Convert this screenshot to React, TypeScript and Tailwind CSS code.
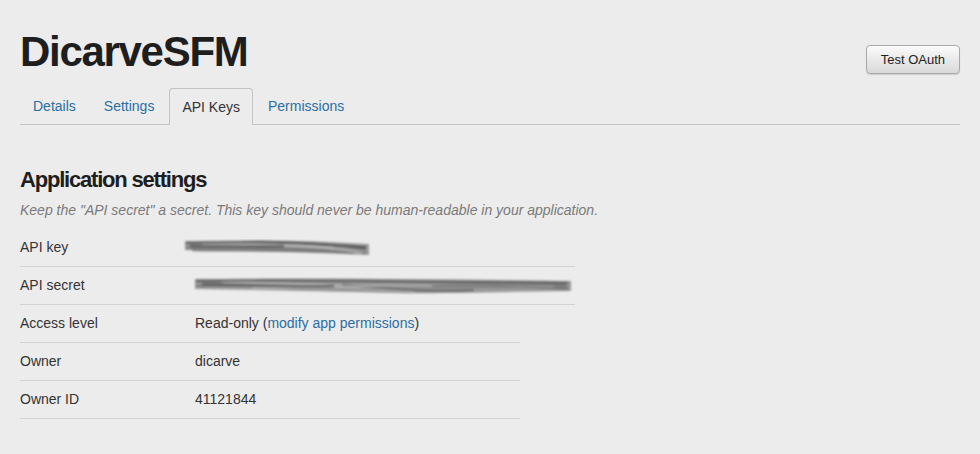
import React from 'react'

const tabs = ['Details', 'Settings', 'API Keys', 'Permissions']

const Scribble = ({ w, h, id, band, strokes }: { w: number; h: number; id: string; band: string; strokes: string[] }) => (
  <svg width={w} height={h} viewBox={`0 0 ${w} ${h}`} className="block">
    <defs>
      <filter id={id} x="-5%" y="-40%" width="110%" height="180%">
        <feGaussianBlur stdDeviation="0.8" />
      </filter>
    </defs>
    <g filter={`url(#${id})`} fill="none" strokeLinecap="round">
      <path d={band} fill="#999999" />
      {strokes.map((d, i) => (
        <path
          key={i}
          d={d}
          stroke={i % 3 === 0 ? '#555555' : i % 3 === 1 ? '#747474' : '#b4b4b4'}
          strokeWidth={i % 2 ? 2 : 2.5}
          opacity={0.8}
        />
      ))}
    </g>
  </svg>
)

const keyBand = 'M2 2 C 60 1, 120 1, 186 5 L 186 16 C 120 13, 60 12, 2 11 Z'
const keyStrokes = [
  'M4 4 C 50 3, 110 3, 182 8',
  'M4 9 C 60 8, 120 8, 182 14',
  'M20 6 C 70 5, 100 5, 150 9',
  'M60 3 C 100 2, 140 4, 182 10',
  'M10 11 C 70 12, 120 10, 170 14',
  'M90 7 C 120 6, 150 9, 178 14',
  'M8 7 C 40 7, 70 8, 100 7',
]

const secretBand = 'M2 2 C 100 1, 240 2, 378 4 L 378 14 C 300 15, 230 17, 200 16 C 120 14, 60 13, 2 12 Z'
const secretStrokes = [
  'M4 4 C 100 3, 220 4, 374 6',
  'M4 9 C 110 8, 240 10, 374 10',
  'M30 6 C 90 5, 150 9, 220 14',
  'M150 8 C 200 12, 230 15, 280 13',
  'M200 5 C 260 6, 320 8, 374 12',
  'M60 11 C 150 9, 300 7, 360 9',
  'M10 7 C 60 8, 100 10, 140 9',
  'M240 9 C 290 8, 330 7, 372 8',
]

const Row = ({ label, children }: { label: string; children: React.ReactNode }) => (
  <div className="flex items-center h-[38px] border-b border-[#d2d2d2]">
    <div className="w-[175px] shrink-0">{label}</div>
    <div className="flex items-center">{children}</div>
  </div>
)

export default function App() {
  return (
    <div className="min-h-screen bg-[#ececec] px-5 text-[#333] font-['Liberation_Sans',Arial,sans-serif]">
      {/* Шапка */}
      <div className="flex justify-between items-start pt-[31px]">
        <h1 className="text-[42px] font-bold leading-none tracking-[-1.3px] text-[#1e1e1e]">DicarveSFM</h1>
        <button className="mt-[14px] h-[29px] px-[14px] text-[13px] text-[#222] rounded-[4px] border border-[#a9a9a9] bg-gradient-to-b from-[#fbfbfb] to-[#d9d9d9] shadow-[0_1px_1px_rgba(0,0,0,0.12)]">
          Test OAuth
        </button>
      </div>

      {/* Вкладки */}
      <div className="mt-[14px] flex gap-[2px] border-b border-[#c4c4c4]">
        {tabs.map((t) => (
          <div
            key={t}
            className={
              t === 'API Keys'
                ? 'h-[37px] -mb-px flex items-center px-3 text-[14px] rounded-t-[4px] border border-b-0 border-[#c4c4c4] bg-[#ececec] text-[#333]'
                : 'h-[36px] flex items-center px-3 text-[14px] border border-transparent text-[#2b6ea3]'
            }
          >
            {t}
          </div>
        ))}
      </div>

      {/* Настройки приложения */}
      <h2 className="mt-[42px] text-[22px] font-bold leading-[26px] tracking-[-1.2px] text-[#1e1e1e]">Application settings</h2>
      <p className="mt-[8px] text-[14px] leading-[18px] italic text-[#7a7a7a]">
        Keep the "API secret" a secret. This key should never be human-readable in your application.
      </p>

      <div className="mt-[10px] w-[555px] text-[14px]">
        <Row label="API key">
          <div className="-ml-[12px]">
            <Scribble w={188} h={18} id="blurKey" band={keyBand} strokes={keyStrokes} />
          </div>
        </Row>
        <Row label="API secret">
          <div className="-ml-[2px]">
            <Scribble w={380} h={18} id="blurSecret" band={secretBand} strokes={secretStrokes} />
          </div>
        </Row>
      </div>
      <div className="w-[500px] text-[14px]">
        <Row label="Access level">
          <span>
            Read-only (<a href="#" className="text-[#2b6ea3]">modify app permissions</a>)
          </span>
        </Row>
        <Row label="Owner">dicarve</Row>
        <Row label="Owner ID">41121844</Row>
      </div>
    </div>
  )
}
